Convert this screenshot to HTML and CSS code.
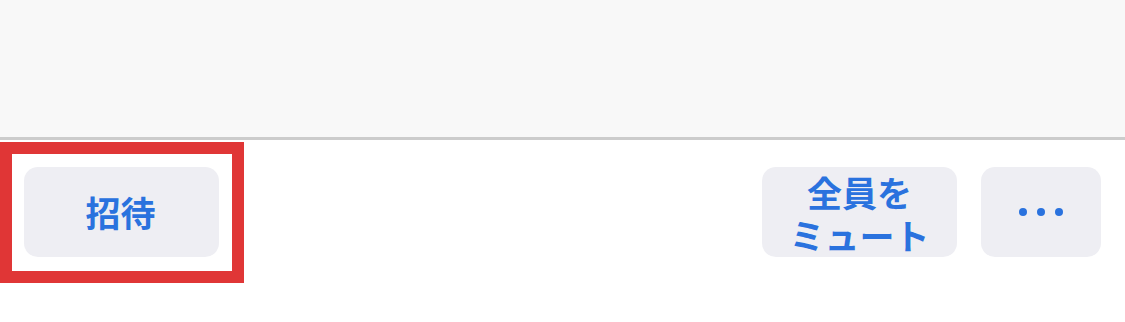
FILE: index.html
```html
<!DOCTYPE html>
<html lang="ja">
  <head>
    <meta charset="UTF-8" />
    <meta name="viewport" content="width=device-width, initial-scale=1.0" />
    <title>参加者</title>
    <link rel="stylesheet" href="styles.css">
  </head>
  <body>
    <div class="list-area"></div>
    <footer class="toolbar">
      <div class="highlight">
        <button class="tool-button invite">招待</button>
      </div>
      <div class="right-tools">
        <button class="tool-button mute">
          <span class="line">全員を</span>
          <span class="line">ミュート</span>
        </button>
        <button class="tool-button more" aria-label="その他">
          <span class="dot"></span>
          <span class="dot"></span>
          <span class="dot"></span>
        </button>
      </div>
    </footer>
  </body>
</html>
```

FILE: styles.css
```css
* {
  margin: 0;
  padding: 0;
  box-sizing: border-box;
}

body {
  font-family: "Noto Sans CJK JP", "Noto Sans", sans-serif;
  background-color: #ffffff;
  width: 1125px;
  height: 322px;
  overflow: hidden;
}

.list-area {
  height: 140px;
  background-color: #f8f8f8;
  border-bottom: 3px solid #cccccc;
}

.toolbar {
  display: flex;
  justify-content: space-between;
  align-items: flex-start;
  padding: 2px 24px 0 0;
}

.highlight {
  border: 12px solid #e03636;
  padding: 13px 13px 14px 12px;
}

.right-tools {
  display: flex;
  gap: 24px;
  padding-top: 25px;
}

.tool-button {
  display: flex;
  align-items: center;
  justify-content: center;
  height: 90px;
  border: none;
  border-radius: 14px;
  background-color: #eeeef3;
  color: #2a72de;
  font-family: inherit;
  font-weight: bold;
  font-size: 35px;
  line-height: 44px;
  text-align: center;
}

.invite,
.mute {
  width: 195px;
}

.invite {
  padding-right: 2px;
}

.mute {
  flex-direction: column;
  padding-top: 2px;
}

.mute .line {
  display: block;
  height: 43px;
  line-height: 43px;
}

.more {
  width: 120px;
  gap: 10px;
}

.dot {
  width: 8px;
  height: 8px;
  border-radius: 50%;
  background-color: #2a72de;
}
```
